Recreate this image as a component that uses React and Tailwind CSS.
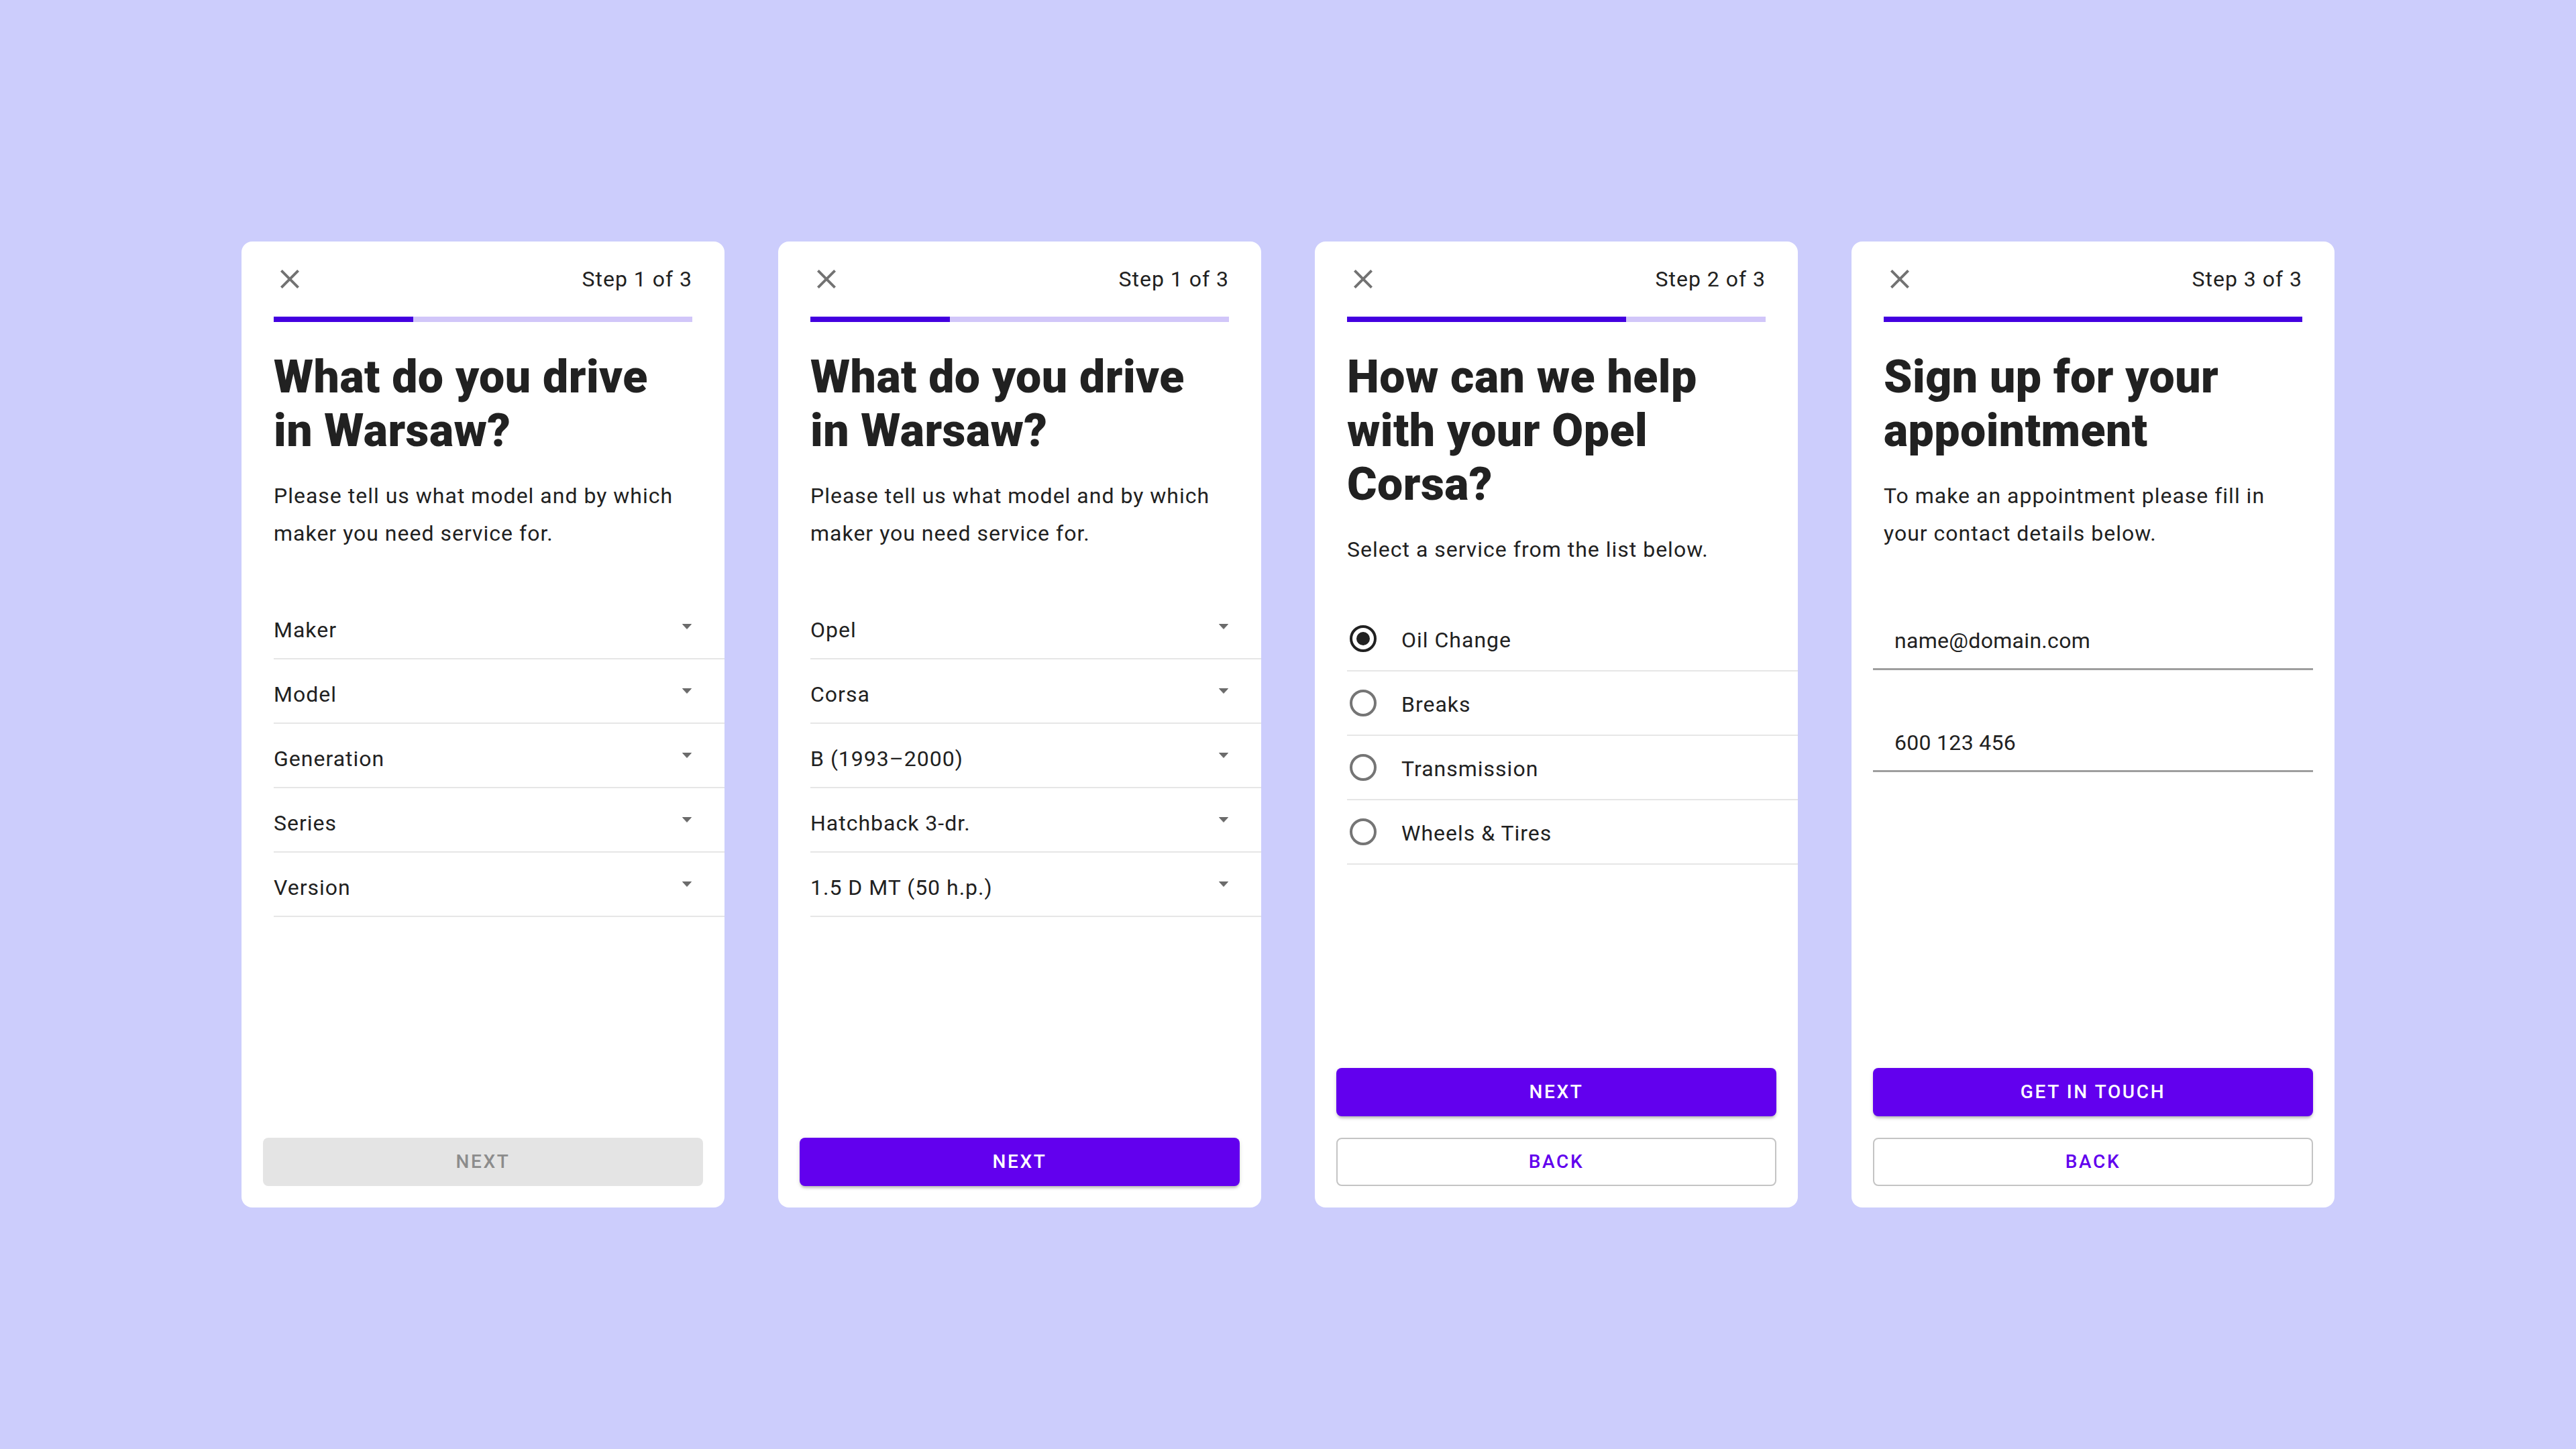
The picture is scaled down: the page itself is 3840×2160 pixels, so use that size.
import React from "react";

const font = "font-['Roboto','Liberation_Sans',sans-serif]";

function CloseIcon() {
  return (
    <svg width="48" height="48" viewBox="0 0 24 24" className="block">
      <path
        fill="#737373"
        d="M19 6.41L17.59 5 12 10.59 6.41 5 5 6.41 10.59 12 5 17.59 6.41 19 12 13.41 17.59 19 19 17.59 13.41 12z"
      />
    </svg>
  );
}

function Caret() {
  return (
    <svg width="14" height="8" viewBox="0 0 14 8" className="block">
      <path d="M0.5 0.5 H13.5 L7 7.5 Z" fill="#6b6b6b" stroke="#6b6b6b" strokeLinejoin="round" />
    </svg>
  );
}

function Header({ step, fill }) {
  return (
    <>
      <div className="flex items-center justify-between px-[48px] pt-[32px]">
        <CloseIcon />
        <span className="text-[32px] leading-[48px] tracking-[1px] text-[#212121]">{step}</span>
      </div>
      <div className="mx-[48px] mt-[32px] h-[8px] bg-[#d1c6f9]">
        <div className={`h-full bg-[#4300e0] ${fill}`} />
      </div>
    </>
  );
}

function Title({ lines }) {
  return (
    <h1 className="mt-[42px] px-[48px] text-[68px] font-black leading-[80px] tracking-[0.45px] text-[#212121]">
      {lines.map((l, i) => (
        <React.Fragment key={i}>
          {i > 0 && <br />}
          {l}
        </React.Fragment>
      ))}
    </h1>
  );
}

function Lead({ lines }) {
  return (
    <p className="mt-[29px] px-[48px] text-[32px] leading-[56px] tracking-[1px] text-[#212121]">
      {lines.map((l, i) => (
        <React.Fragment key={i}>
          {i > 0 && <br />}
          {l}
        </React.Fragment>
      ))}
    </p>
  );
}

function SelectList({ items }) {
  return (
    <div className="mt-[64px] pl-[48px]">
      {items.map((item) => (
        <div
          key={item}
          className="flex h-[96px] items-center justify-between border-b-2 border-[#e6e6e6] pr-[49px]"
        >
          <span className="pt-[10px] text-[32px] leading-[48px] tracking-[1px] text-[#212121]">{item}</span>
          <Caret />
        </div>
      ))}
    </div>
  );
}

function RadioList({ items, selected }) {
  return (
    <div className="mt-[58px] pl-[48px]">
      {items.map((item) => {
        const on = item === selected;
        return (
          <div key={item} className="flex h-[96px] items-center border-b-2 border-[#e6e6e6]">
            <div className="flex h-[48px] w-[48px] items-center justify-center">
              <div
                className={`flex h-[40px] w-[40px] items-center justify-center rounded-full border-4 ${
                  on ? "border-[#212121]" : "border-[#757575]"
                }`}
              >
                {on && <div className="h-[20px] w-[20px] rounded-full bg-[#212121]" />}
              </div>
            </div>
            <span className="ml-[33px] pt-[4px] text-[32px] leading-[48px] tracking-[1px] text-[#212121]">
              {item}
            </span>
          </div>
        );
      })}
    </div>
  );
}

function TextField({ value, first }) {
  return (
    <div
      className={`mx-[32px] flex h-[112px] items-end border-b-[3px] border-[#9e9e9e] px-[32px] pb-[17px] ${
        first ? "mt-[64px]" : "mt-[40px]"
      }`}
    >
      <span className="text-[32px] leading-[48px] tracking-[0.3px] text-[#212121]">{value}</span>
    </div>
  );
}

const btnText = "text-[28px] font-medium uppercase tracking-[2.6px]";

function PrimaryButton({ label, disabled }) {
  if (disabled) {
    return (
      <button
        className={`flex h-[72px] w-full items-center justify-center rounded-[8px] bg-[#e4e4e4] text-[#8c8c8c] ${btnText}`}
      >
        {label}
      </button>
    );
  }
  return (
    <button
      className={`flex h-[72px] w-full items-center justify-center rounded-[8px] bg-[#6200ee] text-white shadow-[0_4px_4px_-2px_rgba(0,0,0,0.25),0_2px_6px_0_rgba(0,0,0,0.12)] ${btnText}`}
    >
      {label}
    </button>
  );
}

function OutlineButton({ label }) {
  return (
    <button
      className={`flex h-[72px] w-full items-center justify-center rounded-[8px] border-2 border-[#c4c4c4] bg-white text-[#6200ee] ${btnText}`}
    >
      {label}
    </button>
  );
}

function Card({ children, actions }) {
  return (
    <div className="flex h-[1440px] w-[720px] flex-col overflow-hidden rounded-[16px] bg-white">
      {children}
      <div className="flex-1" />
      <div className="flex flex-col gap-[32px] px-[32px] pb-[32px]">{actions}</div>
    </div>
  );
}

export default function App() {
  return (
    <div className={`flex h-[2160px] w-full items-center justify-center bg-[#cccdfc] ${font}`}>
      <div className="flex gap-[80px]">
        <Card actions={<PrimaryButton label="Next" disabled />}>
          <Header step="Step 1 of 3" fill="w-1/3" />
          <Title lines={["What do you drive", "in Warsaw?"]} />
          <Lead lines={["Please tell us what model and by which", "maker you need service for."]} />
          <SelectList items={["Maker", "Model", "Generation", "Series", "Version"]} />
        </Card>

        <Card actions={<PrimaryButton label="Next" />}>
          <Header step="Step 1 of 3" fill="w-1/3" />
          <Title lines={["What do you drive", "in Warsaw?"]} />
          <Lead lines={["Please tell us what model and by which", "maker you need service for."]} />
          <SelectList
            items={["Opel", "Corsa", "B (1993–2000)", "Hatchback 3-dr.", "1.5 D MT (50 h.p.)"]}
          />
        </Card>

        <Card
          actions={
            <>
              <PrimaryButton label="Next" />
              <OutlineButton label="Back" />
            </>
          }
        >
          <Header step="Step 2 of 3" fill="w-2/3" />
          <Title lines={["How can we help", "with your Opel", "Corsa?"]} />
          <Lead lines={["Select a service from the list below."]} />
          <RadioList
            items={["Oil Change", "Breaks", "Transmission", "Wheels & Tires"]}
            selected="Oil Change"
          />
        </Card>

        <Card
          actions={
            <>
              <PrimaryButton label="Get in touch" />
              <OutlineButton label="Back" />
            </>
          }
        >
          <Header step="Step 3 of 3" fill="w-full" />
          <Title lines={["Sign up for your", "appointment"]} />
          <Lead lines={["To make an appointment please fill in", "your contact details below."]} />
          <TextField value="name@domain.com" first />
          <TextField value="600 123 456" />
        </Card>
      </div>
    </div>
  );
}
